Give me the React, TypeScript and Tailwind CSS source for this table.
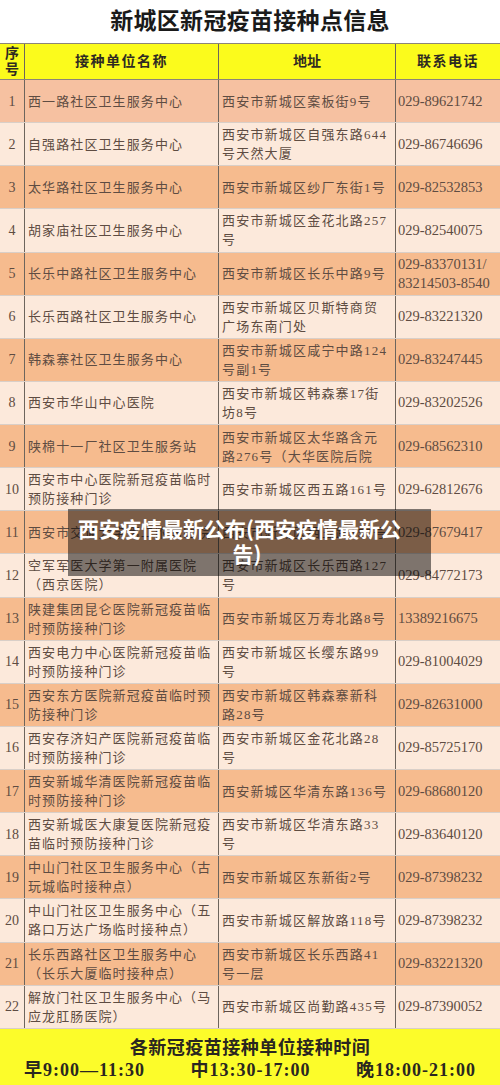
import React from "react";

type Row = {
  n: number;
  name: string[];
  addr: string[];
  phone: string[];
  addrTop?: boolean;
};

const rows: Row[] = [
  { n: 1, name: ["西一路社区卫生服务中心"], addr: ["西安市新城区案板街9号"], phone: ["029-89621742"] },
  { n: 2, name: ["自强路社区卫生服务中心"], addr: ["西安市新城区自强东路644", "号天然大厦"], phone: ["029-86746696"] },
  { n: 3, name: ["太华路社区卫生服务中心"], addr: ["西安市新城区纱厂东街1号"], phone: ["029-82532853"] },
  { n: 4, name: ["胡家庙社区卫生服务中心"], addr: ["西安市新城区金花北路257", "号"], phone: ["029-82540075"] },
  { n: 5, name: ["长乐中路社区卫生服务中心"], addr: ["西安市新城区长乐中路9号"], phone: ["029-83370131/", "83214503-8540"] },
  { n: 6, name: ["长乐西路社区卫生服务中心"], addr: ["西安市新城区贝斯特商贸", "广场东南门处"], phone: ["029-83221320"] },
  { n: 7, name: ["韩森寨社区卫生服务中心"], addr: ["西安市新城区咸宁中路124", "号副1号"], phone: ["029-83247445"] },
  { n: 8, name: ["西安市华山中心医院"], addr: ["西安市新城区韩森寨17街", "坊8号"], phone: ["029-83202526"] },
  { n: 9, name: ["陕棉十一厂社区卫生服务站"], addr: ["西安市新城区太华路含元", "路276号（大华医院后院", "内）"], phone: ["029-68562310"], addrTop: true },
  { n: 10, name: ["西安市中心医院新冠疫苗临时", "预防接种门诊"], addr: ["西安市新城区西五路161号"], phone: ["029-62812676"] },
  { n: 11, name: ["西安市交通大学第二附属医院"], addr: ["西安市新城区西五路157号"], phone: ["029-87679417"] },
  { n: 12, name: ["空军军医大学第一附属医院", "（西京医院）"], addr: ["西安市新城区长乐西路127", "号"], phone: ["029-84772173"] },
  { n: 13, name: ["陕建集团昆仑医院新冠疫苗临", "时预防接种门诊"], addr: ["西安市新城区万寿北路8号"], phone: ["13389216675"] },
  { n: 14, name: ["西安电力中心医院新冠疫苗临", "时预防接种门诊"], addr: ["西安市新城区长缨东路99", "号"], phone: ["029-81004029"] },
  { n: 15, name: ["西安东方医院新冠疫苗临时预", "防接种门诊"], addr: ["西安市新城区韩森寨新科", "路28号"], phone: ["029-82631000"] },
  { n: 16, name: ["西安存济妇产医院新冠疫苗临", "时预防接种门诊"], addr: ["西安市新城区金花北路28", "号"], phone: ["029-85725170"] },
  { n: 17, name: ["西安新城华清医院新冠疫苗临", "时预防接种门诊"], addr: ["西安新城区华清东路136号"], phone: ["029-68680120"] },
  { n: 18, name: ["西安新城医大康复医院新冠疫", "苗临时预防接种门诊"], addr: ["西安市新城区华清东路33", "号"], phone: ["029-83640120"] },
  { n: 19, name: ["中山门社区卫生服务中心（古", "玩城临时接种点）"], addr: ["西安市新城区东新街2号"], phone: ["029-87398232"] },
  { n: 20, name: ["中山门社区卫生服务中心（五", "路口万达广场临时接种点）"], addr: ["西安市新城区解放路118号"], phone: ["029-87398232"] },
  { n: 21, name: ["长乐西路社区卫生服务中心", "（长乐大厦临时接种点）"], addr: ["西安市新城区长乐西路41", "号一层"], phone: ["029-83221320"] },
  { n: 22, name: ["解放门社区卫生服务中心（马", "应龙肛肠医院）"], addr: ["西安市新城区尚勤路435号"], phone: ["029-87390052"] },
];

const FONT = { fontFamily: '"Liberation Serif", "Noto Sans CJK SC", serif' };

function Lines({ lines, top }: { lines: string[]; top?: boolean }) {
  return (
    <div
      className={
        "flex flex-col h-full overflow-hidden " + (top ? "justify-start pt-[3px]" : "justify-center")
      }
    >
      {lines.map((l, i) => (
        <div key={i} className="whitespace-nowrap leading-[19px]">
          {l}
        </div>
      ))}
    </div>
  );
}

export default function App() {
  return (
    <div className="relative w-[500px] h-[1085px] bg-white overflow-hidden" style={FONT}>
      {/* Title */}
      <div className="h-[43px] flex items-center justify-center">
        <div className="text-[23px] font-bold text-[#1a1a1a] tracking-[0.3px] leading-none">
          新城区新冠疫苗接种点信息
        </div>
      </div>

      {/* Header */}
      <div className="flex h-[37px] bg-[#fbfb1c] border-t border-b border-[#8c8478] text-[#2e2a22] font-bold">
        <div className="w-[25px] shrink-0 border-r border-[#6d655d] flex flex-col items-center justify-center text-[14px] leading-[16px]">
          <span>序</span>
          <span>号</span>
        </div>
        <div className="w-[194px] shrink-0 border-r border-[#6d655d] flex items-center justify-center text-[14px] tracking-[1.5px]">
          接种单位名称
        </div>
        <div className="w-[177px] shrink-0 border-r border-[#6d655d] flex items-center justify-center text-[14px]">
          地址
        </div>
        <div className="flex-1 flex items-center justify-center text-[14px] tracking-[1.5px]">
          联系电话
        </div>
      </div>

      {/* Rows */}
      {rows.map((r) => {
        const odd = r.n % 2 === 1;
        const bg = r.n === 1 ? "bg-[#f6c1a1]" : odd ? "bg-[#f6bb8e]" : "bg-[#fce9db]";
        return (
          <div
            key={r.n}
            className={"flex h-[43.14px] border-b border-[#d9cfc8] text-[#5e4c42] " + bg}
          >
            <div className="w-[25px] shrink-0 border-r border-[#6d655d] flex items-center justify-center text-[14px]">
              {r.n}
            </div>
            <div className="w-[194px] shrink-0 border-r border-[#6d655d] pl-[3px] text-[13px] tracking-[1.1px]">
              <Lines lines={r.name} />
            </div>
            <div className="w-[177px] shrink-0 border-r border-[#6d655d] pl-[3px] text-[13px] tracking-[1.2px]">
              <Lines lines={r.addr} top={r.addrTop} />
            </div>
            <div className="flex-1 pl-[2px] text-[14.5px]">
              <Lines lines={r.phone} />
            </div>
          </div>
        );
      })}

      {/* Footer */}
      <div className="h-[56px] bg-[#fcfc2a] flex flex-col text-[#2a2620] font-bold">
        <div className="text-center text-[18px] leading-[20px] pt-[9px] tracking-[0.5px]">
          各新冠疫苗接种单位接种时间
        </div>
        <div className="flex justify-between px-[24px] text-[18px] leading-[22px] tracking-[1px] mt-[1px]">
          <span>早9:00—11:30</span>
          <span>中13:30-17:00</span>
          <span>晚18:00-21:00</span>
        </div>
      </div>

      {/* Overlay caption */}
      <div
        className="absolute left-[68px] top-[509px] w-[363px] h-[67px] bg-black/50 flex flex-col justify-center pb-[3px] text-white font-bold text-[21px] leading-[25px]"
        style={{ fontFamily: '"Noto Sans CJK SC", "Liberation Sans", sans-serif' }}
      >
        <div className="pl-[10px] whitespace-nowrap">西安疫情最新公布(西安疫情最新公</div>
        <div className="text-center pr-[5px]">告)</div>
      </div>
    </div>
  );
}
